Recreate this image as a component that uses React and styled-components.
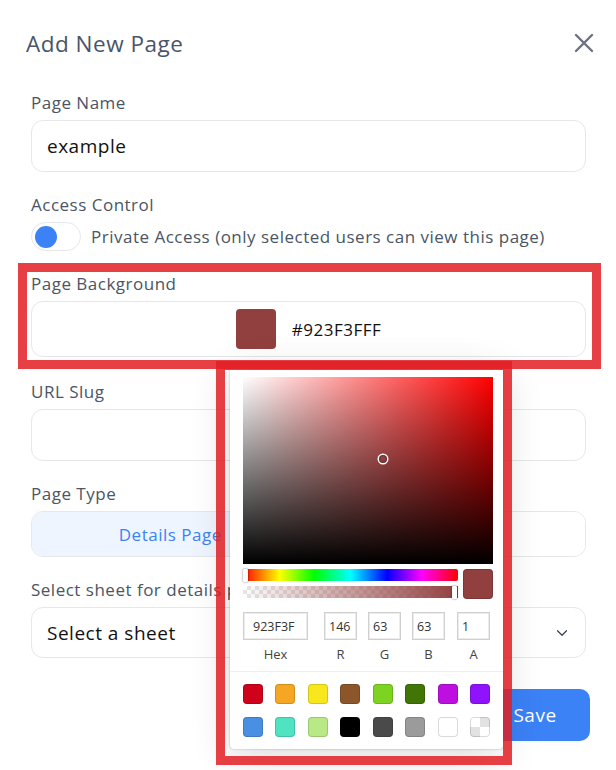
import React from "react";
import styled, { createGlobalStyle } from "styled-components";
import { ChevronDown } from "lucide-react";

const GlobalStyle = createGlobalStyle`
  * { box-sizing: border-box; }
  body {
    margin: 0;
    background: #fff;
    font-family: "Open Sans", "Noto Sans", sans-serif;
  }
`;

const Modal = styled.div`
  width: 616px;
  height: 770px;
  padding: 28px 30px 0 31px;
  display: flex;
  flex-direction: column;
  overflow: hidden;
  letter-spacing: 0.5px;
`;

const Header = styled.div`
  display: flex;
  align-items: center;
  justify-content: space-between;
  height: 30px;
  margin: 0 -9px 35px -5px;
`;

const Title = styled.h2`
  margin: 0;
  font-size: 22.5px;
  font-weight: 400;
  color: #4a5568;
`;

const CloseButton = styled.button`
  border: 0;
  background: none;
  padding: 0;
  width: 22px;
  height: 22px;
  display: flex;
  align-items: center;
  justify-content: center;
`;

const Field = styled.div`
  position: relative;
  display: flex;
  flex-direction: column;
  margin-bottom: ${(p) => (p.$marked ? 25 : 23)}px;
  ${(p) =>
    p.$marked &&
    `
    &::after {
      content: "";
      position: absolute;
      left: -13px;
      right: -15px;
      top: -11px;
      bottom: -12px;
      border: 9px solid rgba(226, 30, 36, 0.85);
      pointer-events: none;
      z-index: 3;
    }
  `}
`;

const Label = styled.label`
  font-size: 17px;
  line-height: 20px;
  color: #4b5563;
  margin-bottom: 7px;
`;

const TextBox = styled.div`
  height: ${(p) => p.$h || 52}px;
  border: 1px solid #e5e7eb;
  border-radius: 12px;
  background: #fff;
  display: flex;
  align-items: center;
  padding: 0 15px;
  font-size: 19px;
  color: #111;
`;

const ToggleRow = styled.div`
  display: flex;
  align-items: center;
  gap: 10px;
`;

const Toggle = styled.div`
  width: 50px;
  height: 29px;
  border: 1px solid #e5e7eb;
  border-radius: 15px;
  background: #fff;
  display: flex;
  align-items: center;
  padding-left: 3px;
  &::before {
    content: "";
    width: 22px;
    height: 22px;
    border-radius: 50%;
    background: #3b82f6;
  }
`;

const ToggleText = styled.span`
  font-size: 17px;
  color: #4b5563;
`;

const ColorBox = styled(TextBox)`
  justify-content: center;
  gap: 16px;
  font-size: 17px;
`;

const ColorChip = styled.span`
  width: 40px;
  height: 40px;
  border-radius: 4px;
  background: ${(p) => p.$color};
`;

const Segments = styled.div`
  height: 46px;
  border: 1px solid #e5e7eb;
  border-radius: 12px;
  display: grid;
  grid-template-columns: 1fr 1fr;
  overflow: hidden;
`;

const Segment = styled.div`
  display: flex;
  align-items: center;
  justify-content: center;
  font-size: 17px;
  color: ${(p) => (p.$active ? "#3b82f6" : "#6b7280")};
  background: ${(p) => (p.$active ? "#eef5ff" : "#fff")};
`;

const SelectBox = styled(TextBox)`
  height: 51px;
  justify-content: space-between;
  padding-right: 14px;
`;

const Footer = styled.div`
  display: flex;
  justify-content: flex-end;
  gap: 12px;
  margin: 8px -4px 0 0;
`;

const Button = styled.button`
  height: 52px;
  width: 110px;
  border-radius: 10px;
  font-family: inherit;
  letter-spacing: inherit;
  font-size: 19px;
  border: ${(p) => (p.$primary ? "0" : "1px solid #e5e7eb")};
  background: ${(p) => (p.$primary ? "#3b82f6" : "#fff")};
  color: ${(p) => (p.$primary ? "#fff" : "#374151")};
`;

/* color picker popover */
const Popover = styled.div`
  position: absolute;
  top: 95px;
  left: 199px;
  width: 273px;
  background: #fff;
  border-radius: 0 0 4px 4px;
  box-shadow: 0 0 2px rgba(0, 0, 0, 0.3), 0 6px 40px rgba(0, 0, 0, 0.16);
  z-index: 2;
  letter-spacing: 0;
  &::after {
    content: "";
    position: absolute;
    left: -14px;
    right: -9px;
    top: -8px;
    bottom: -16px;
    border: 9px solid rgba(226, 30, 36, 0.85);
    pointer-events: none;
  }
`;

const PickerBody = styled.div`
  padding: 8px 10px 0 13px;
`;

const Saturation = styled.div`
  position: relative;
  height: 187px;
  background: linear-gradient(to top, #000, rgba(0, 0, 0, 0)),
    linear-gradient(to right, #fff, rgba(255, 255, 255, 0)), #f00;
`;

const SatPointer = styled.div`
  position: absolute;
  left: 136px;
  top: 78px;
  width: 8px;
  height: 8px;
  border-radius: 50%;
  box-shadow: 0 0 0 1.5px #fff, inset 0 0 1px 1px rgba(0, 0, 0, 0.3);
`;

const SliderRow = styled.div`
  display: flex;
  gap: 5px;
  margin-top: 5px;
`;

const Sliders = styled.div`
  flex: 1;
  display: flex;
  flex-direction: column;
  gap: 5px;
`;

const checker = `
  background-color: #fff;
  background-image: linear-gradient(45deg, #e6e6e6 25%, transparent 25%, transparent 75%, #e6e6e6 75%),
    linear-gradient(45deg, #e6e6e6 25%, transparent 25%, transparent 75%, #e6e6e6 75%);
  background-size: 8px 8px;
  background-position: 0 0, 4px 4px;
`;

const Bar = styled.div`
  position: relative;
  height: 12px;
  border-radius: 2px;
  ${(p) =>
    p.$hue
      ? `background: linear-gradient(to right, #f00 0%, #ff0 17%, #0f0 33%, #0ff 50%, #00f 67%, #f0f 83%, #f00 100%);`
      : `${checker}`}
`;

const AlphaFill = styled.div`
  position: absolute;
  inset: 0;
  background: linear-gradient(to right, rgba(146, 63, 63, 0), #923f3f);
`;

const Handle = styled.div`
  position: absolute;
  top: 0;
  width: 5px;
  height: 13px;
  background: #fff;
  border-radius: 1px;
  box-shadow: 0 0 2px rgba(0, 0, 0, 0.6);
  ${(p) => (p.$right ? "right: 1px;" : "left: 0;")}
`;

const Preview = styled.div`
  width: 30px;
  height: 30px;
  border-radius: 4px;
  background: #923f3f;
  box-shadow: inset 0 0 0 1px rgba(0, 0, 0, 0.15);
`;

const Inputs = styled.div`
  display: flex;
  margin-top: 13px;
  padding-right: 4px;
`;

const InputCol = styled.div`
  display: flex;
  flex-direction: column;
  align-items: center;
  margin-left: ${(p) => p.$gap || 0}px;
`;

const Num = styled.div`
  width: ${(p) => p.$w || 33}px;
  height: 28px;
  border: 1px solid #d0d0d0;
  box-shadow: inset 0 0 0 1px #ececec;
  font-size: 12.5px;
  color: #333;
  display: flex;
  align-items: center;
  padding-left: ${(p) => (p.$w ? 9 : 4)}px;
`;

const NumLabel = styled.span`
  font-size: 13px;
  color: #444;
  margin-top: 6px;
  line-height: 16px;
`;

const Divider = styled.div`
  height: 1px;
  background: #eee;
  margin-top: 9px;
`;

const Swatches = styled.div`
  display: grid;
  grid-template-columns: repeat(8, 20px);
  justify-content: space-between;
  row-gap: 13px;
  padding: 12px 13px 12px 13px;
`;

const Swatch = styled.div`
  width: 20px;
  height: 20px;
  border-radius: 4px;
  box-shadow: inset 0 0 0 1px rgba(0, 0, 0, 0.15);
  ${(p) =>
    p.$color === "transparent"
      ? `background-color: #fff;
         background-image: linear-gradient(45deg, #e2e2e2 25%, transparent 25%, transparent 75%, #e2e2e2 75%),
           linear-gradient(45deg, #e2e2e2 25%, transparent 25%, transparent 75%, #e2e2e2 75%);
         background-size: 20px 20px;
         background-position: 0 0, 10px 10px;`
      : `background: ${p.$color};`}
`;

const swatchColors = [
  "#D0021B", "#F5A623", "#F8E71C", "#8B572A", "#7ED321", "#417505", "#BD10E0", "#9013FE",
  "#4A90E2", "#50E3C2", "#B8E986", "#000000", "#4A4A4A", "#9B9B9B", "#FFFFFF", "transparent",
];

const ColorPicker = () => (
  <Popover>
    <PickerBody>
      <Saturation>
        <SatPointer />
      </Saturation>
      <SliderRow>
        <Sliders>
          <Bar $hue>
            <Handle />
          </Bar>
          <Bar>
            <AlphaFill />
            <Handle $right />
          </Bar>
        </Sliders>
        <Preview />
      </SliderRow>
      <Inputs>
        <InputCol>
          <Num $w={65}>923F3F</Num>
          <NumLabel>Hex</NumLabel>
        </InputCol>
        <InputCol $gap={16}>
          <Num>146</Num>
          <NumLabel>R</NumLabel>
        </InputCol>
        <InputCol $gap={11}>
          <Num>63</Num>
          <NumLabel>G</NumLabel>
        </InputCol>
        <InputCol $gap={11}>
          <Num>63</Num>
          <NumLabel>B</NumLabel>
        </InputCol>
        <InputCol $gap={12}>
          <Num>1</Num>
          <NumLabel>A</NumLabel>
        </InputCol>
      </Inputs>
    </PickerBody>
    <Divider />
    <Swatches>
      {swatchColors.map((c) => (
        <Swatch key={c} $color={c} />
      ))}
    </Swatches>
  </Popover>
);

export default function App() {
  return (
    <>
      <GlobalStyle />
      <Modal>
        <Header>
          <Title>Add New Page</Title>
          <CloseButton>
            <svg width="20" height="20" viewBox="0 0 20 20">
              <path d="M2 2L18 18M18 2L2 18" stroke="#6b7280" strokeWidth="2.4" strokeLinecap="round" />
            </svg>
          </CloseButton>
        </Header>

        <Field>
          <Label>Page Name</Label>
          <TextBox>example</TextBox>
        </Field>

        <Field>
          <Label>Access Control</Label>
          <ToggleRow>
            <Toggle />
            <ToggleText>Private Access (only selected users can view this page)</ToggleText>
          </ToggleRow>
        </Field>

        <Field $marked>
          <Label>Page Background</Label>
          <ColorBox $h={56}>
            <ColorChip $color="#923F3F" />
            #923F3FFF
          </ColorBox>
          <ColorPicker />
        </Field>

        <Field>
          <Label>URL Slug</Label>
          <TextBox />
        </Field>

        <Field>
          <Label>Page Type</Label>
          <Segments>
            <Segment $active>Details Page</Segment>
            <Segment>List Page</Segment>
          </Segments>
        </Field>

        <Field>
          <Label>Select sheet for details page</Label>
          <SelectBox>
            Select a sheet
            <ChevronDown size={18} strokeWidth={1.6} color="#374151" />
          </SelectBox>
        </Field>

        <Footer>
          <Button>Cancel</Button>
          <Button $primary>Save</Button>
        </Footer>
      </Modal>
    </>
  );
}
